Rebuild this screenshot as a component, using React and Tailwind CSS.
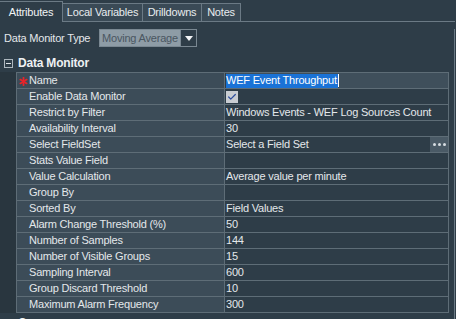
import { Check } from 'lucide-react';

const rows = [
  ['Name', 'WEF Event Throughput', 'edit'],
  ['Enable Data Monitor', '', 'check'],
  ['Restrict by Filter', 'Windows Events - WEF Log Sources Count'],
  ['Availability Interval', '30'],
  ['Select FieldSet', 'Select a Field Set', 'picker'],
  ['Stats Value Field', ''],
  ['Value Calculation', 'Average value per minute'],
  ['Group By', ''],
  ['Sorted By', 'Field Values'],
  ['Alarm Change Threshold (%)', '50'],
  ['Number of Samples', '144'],
  ['Number of Visible Groups', '15'],
  ['Sampling Interval', '600'],
  ['Group Discard Threshold', '10'],
  ['Maximum Alarm Frequency', '300']
];

const tabs = [
  ['Attributes', 'w-[63px]'],
  ['Local Variables', 'w-[80px]'],
  ['Drilldowns', 'w-[59px]'],
  ['Notes', 'w-[39px]']
];

const SectionHeader = ({ label }) => (
  <div className="flex h-[16px] items-center">
    <div className="ml-[4px] flex h-[9px] w-[9px] items-center justify-center border border-[#aeb8bf]">
      <div className="h-px w-[5px] bg-[#dfe4e8]" />
    </div>
    <span className="ml-[5px] text-[12px] font-bold text-[#eef1f3]">{label}</span>
  </div>
);

const RequiredMark = () => (
  <svg className="absolute left-[2px] top-[4px]" width="9" height="9" viewBox="0 0 9 9">
    <g stroke="#e8242a" strokeWidth="1.8" strokeLinecap="round">
      <line x1="4.5" y1="0.8" x2="4.5" y2="8.2" />
      <line x1="1.3" y1="2.6" x2="7.7" y2="6.4" />
      <line x1="1.3" y1="6.4" x2="7.7" y2="2.6" />
    </g>
  </svg>
);

const ValueCell = ({ value, kind }) => {
  if (kind === 'edit') {
    return (
      <div className="flex h-full items-center bg-[#3f4f5b]">
        <span className="flex h-[14px] items-center bg-[#1a72d6] pr-[1px] text-white">{value}</span>
        <span className="h-[13px] w-px bg-white" />
      </div>
    );
  }
  if (kind === 'check') {
    return (
      <div className="flex h-full items-center">
        <div className="flex h-[12px] w-[12px] items-center justify-center bg-[#c9cdd2]">
          <Check className="h-[10px] w-[10px] text-[#2f4f9e]" strokeWidth={3} />
        </div>
      </div>
    );
  }
  if (kind === 'picker') {
    return (
      <div className="flex h-full items-center justify-between">
        <span>{value}</span>
        <span className="flex h-[15px] w-[18px] items-center justify-center gap-[2px] bg-[#4a5a66]">
          <span className="h-[3px] w-[3px] rounded-full bg-[#d7dde2]" />
          <span className="h-[3px] w-[3px] rounded-full bg-[#d7dde2]" />
          <span className="h-[3px] w-[3px] rounded-full bg-[#d7dde2]" />
        </span>
      </div>
    );
  }
  return <div className="flex h-full items-center">{value}</div>;
};

export default function App() {
  return (
    <div
      className="h-[319px] w-[456px] overflow-hidden bg-[#2e3d48] text-[11px] tracking-[-0.2px] text-[#e4e8eb]"
      style={{ fontFamily: '"Liberation Sans", Arial, sans-serif' }}
    >
      <div className="flex h-[22px] items-end">
        {tabs.map(([label, width], i) =>
          i === 0 ? (
            <div key={label} className={`${width} flex h-[21px] items-center justify-center border-r border-t border-[#6b7a85] bg-[#2e3d48] text-[#f2f4f6]`}>
              {label}
            </div>
          ) : (
            <div key={label} className={`${width} flex h-[19px] items-center justify-center border-b border-r border-t border-[#6b7a85] bg-[#3a4a56] text-[#e8ecef]`}>
              {label}
            </div>
          )
        )}
        <div className="h-[19px] w-[214px] border-b border-[#6b7a85]" />
      </div>

      <div className="h-[297px] w-[455px] border-r border-[#6b7a85]">
        <div className="mt-[7px] flex h-[18px] items-center">
          <span className="ml-[4px] w-[95px]">Data Monitor Type</span>
          <div className="flex h-[18px] w-[98px] border border-[#7a8892]">
            <div className="flex flex-1 items-center bg-[#8e9ca6] pl-[2px] text-[#4a5661]">Moving Average</div>
            <div className="flex w-[16px] items-center justify-center border-l border-[#7a8892] bg-[#2e3d48]">
              <svg width="8" height="5" viewBox="0 0 8 5">
                <path d="M0 0 L8 0 L4 5 Z" fill="#f2f4f6" />
              </svg>
            </div>
          </div>
        </div>

        <div className="mt-[8px]">
          <SectionHeader label="Data Monitor" />
        </div>

        <div className="mt-[1px] flex">
          <div className="w-[16px] bg-[#29363f]" />
          <div className="w-[433px] border-l border-t border-[#5e6d77]">
            {rows.map(([label, value, kind]) => (
              <div key={label} className="flex h-[16px]">
                <div className="relative flex w-[208px] items-center border-b border-r border-[#5e6d77] bg-[#3c4c58] pl-[12px]">
                  {kind === 'edit' && <RequiredMark />}
                  {label}
                </div>
                <div className="w-[224px] border-b border-r border-[#5e6d77] pl-[1px]">
                  <ValueCell value={value} kind={kind} />
                </div>
              </div>
            ))}
          </div>
        </div>

        <div className="mt-[2px]">
          <SectionHeader label="Common" />
        </div>
      </div>
    </div>
  );
}
